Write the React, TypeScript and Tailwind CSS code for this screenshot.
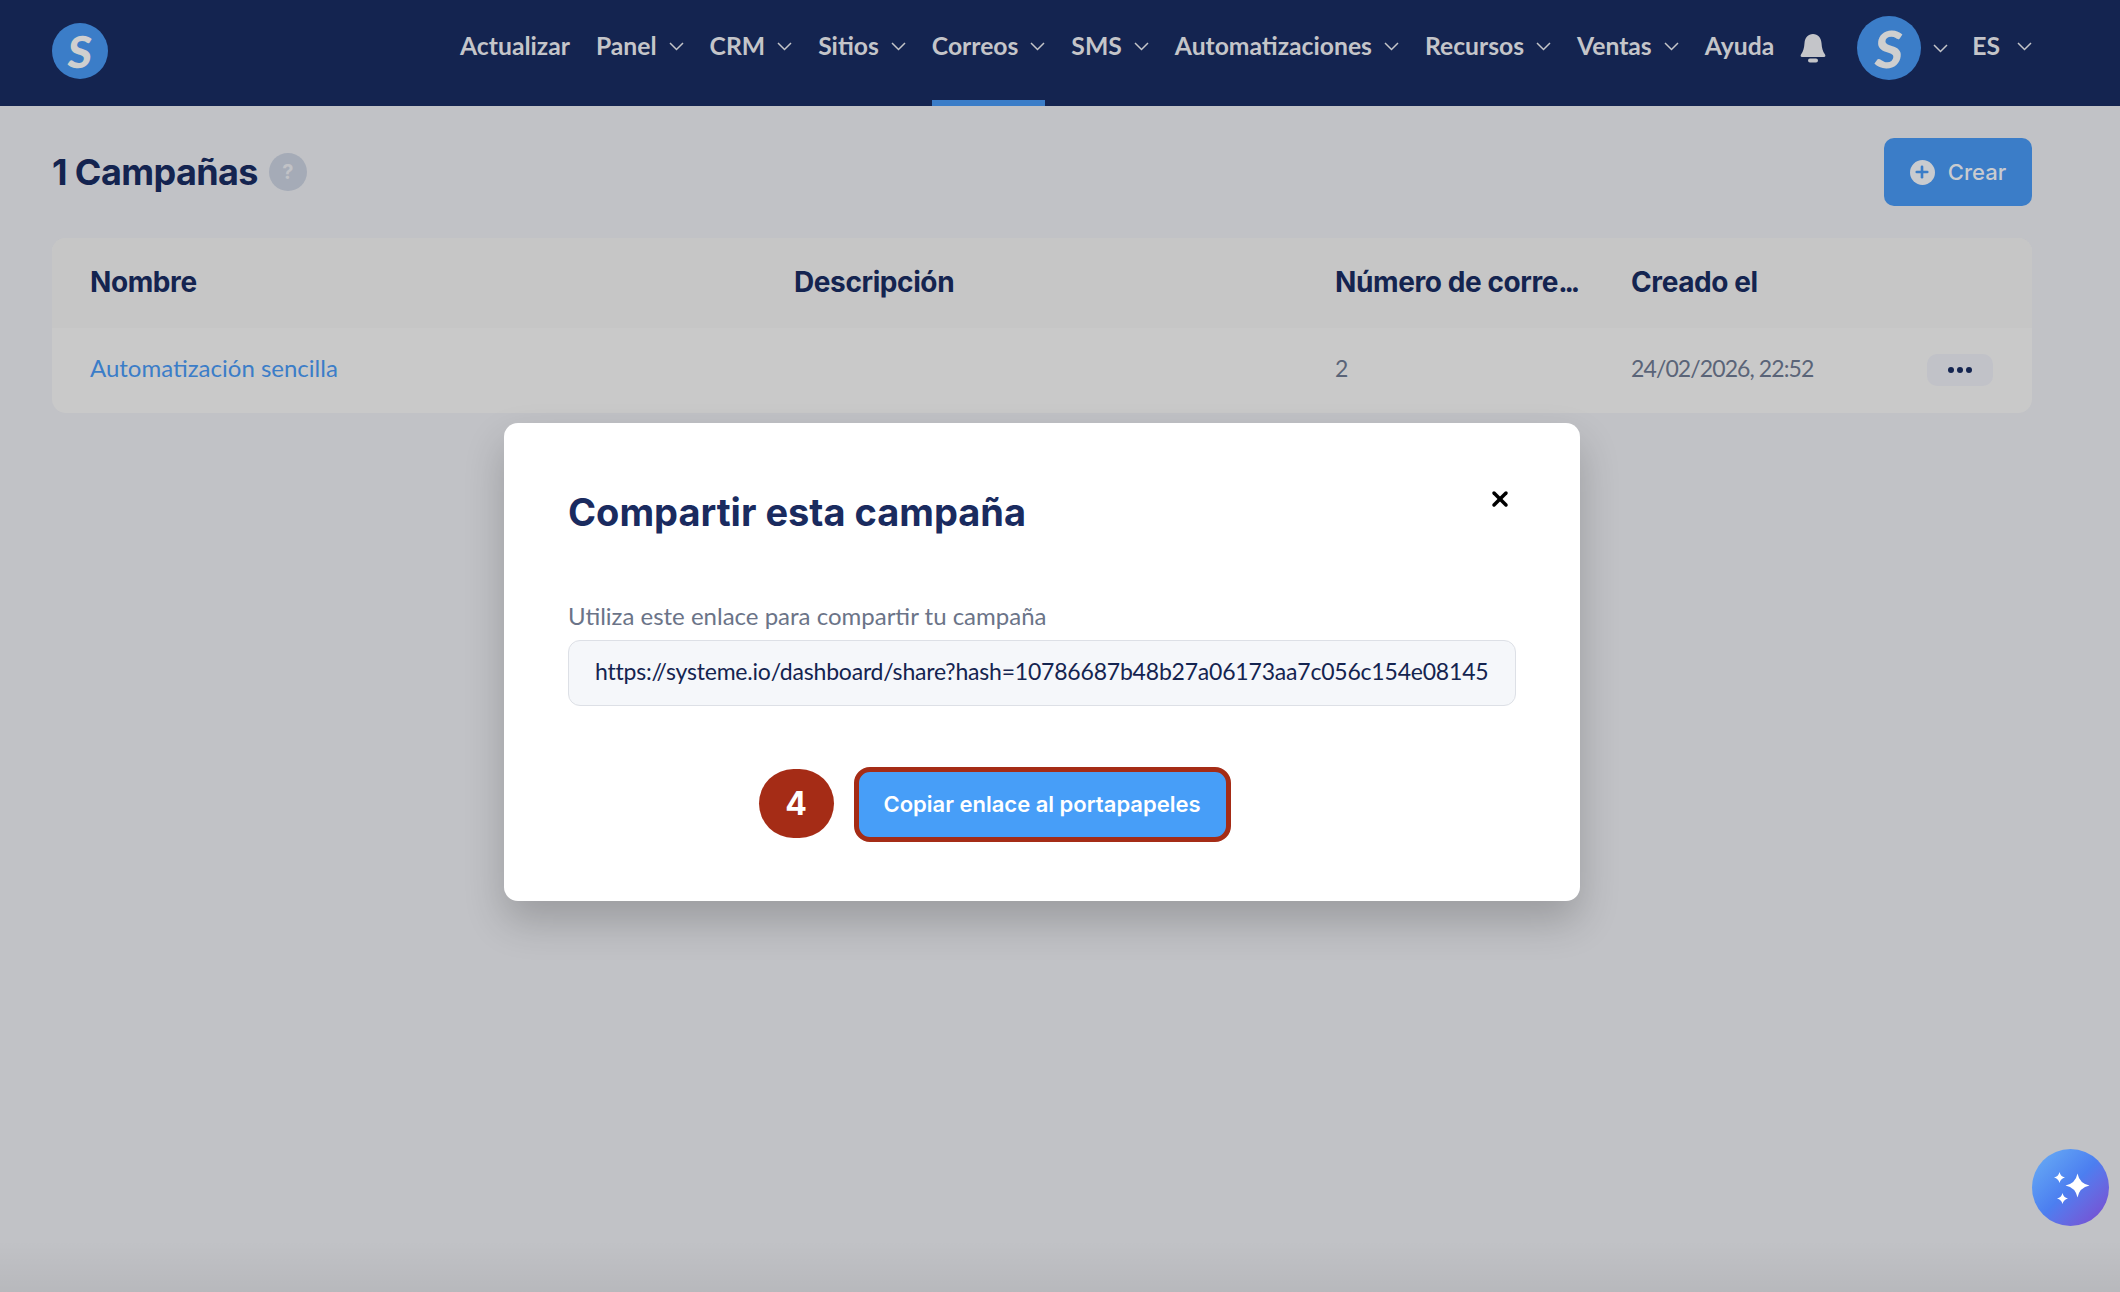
import React from "react";
import { X, Plus } from "lucide-react";

const navItems = [
  { label: "Actualizar", chevron: false },
  { label: "Panel", chevron: true },
  { label: "CRM", chevron: true },
  { label: "Sitios", chevron: true },
  { label: "Correos", chevron: true, active: true },
  { label: "SMS", chevron: true },
  { label: "Automatizaciones", chevron: true },
  { label: "Recursos", chevron: true },
  { label: "Ventas", chevron: true },
  { label: "Ayuda", chevron: false },
];

function Chevron() {
  return (
    <svg width="15" height="9" viewBox="0 0 15 9" fill="none" className="stroke-[#c4c5c9]">
      <path d="M1 1l6.500 6.500L14 1" strokeWidth="1.500" />
    </svg>
  );
}

function NavItem({ label, chevron, active }: { label: string; chevron: boolean; active?: boolean }) {
  return (
    <div
      className={`flex h-[106px] items-center gap-[12px] border-b-[6px] pb-[8px] ${
        active ? "border-[#3b7dc8]" : "border-transparent"
      }`}
    >
      <span className="text-[24.7px] font-bold leading-none text-[#c4c5c9]">{label}</span>
      {chevron && <Chevron />}
    </div>
  );
}

export default function App() {
  return (
    <div className="relative h-[1292px] w-full overflow-hidden bg-[#c1c2c6] font-['Lato',sans-serif]">
      {/* Header */}
      <header className="flex h-[106px] items-start justify-between bg-[#142450] pl-[52px] pr-[88px]">
        <div className="mt-[23px] flex h-[56px] w-[56px] items-center justify-center rounded-full bg-[#3b7dc8]">
          <span className="-skew-x-6 text-[44px] font-black leading-none text-[#cfcfcf]">S</span>
        </div>
        <nav className="flex items-start gap-[26px]">
          {navItems.map((item) => (
            <NavItem key={item.label} {...item} />
          ))}
          <div className="mr-[5px] flex h-[96px] items-center">
            <svg width="26" height="29" viewBox="0 0 26 29" className="fill-[#c4c5c9]">
              <path d="M13 0c5 0 8 3.500 8.500 9 .4 5 1 8 3.500 11.500.8 1.200.3 2.500-1 2.500H2c-1.300 0-1.800-1.300-1-2.500C3.500 17 4.100 14 4.500 9 5 3.500 8 0 13 0z" />
              <rect x="8" y="24.500" width="10" height="4" rx="2" />
            </svg>
          </div>
          <div className="-mr-[2px] flex h-[96px] items-center gap-[12px]">
            <div className="flex h-[64px] w-[64px] items-center justify-center rounded-full bg-[#3b7dc8]">
              <span className="-skew-x-6 text-[51px] font-black leading-none text-[#cfcfcf]">S</span>
            </div>
            <Chevron />
          </div>
          <div className="flex h-[106px] items-center gap-[17px] pb-[14px]">
            <span className="text-[24.7px] font-bold leading-none text-[#c4c5c9]">ES</span>
            <Chevron />
          </div>
        </nav>
      </header>

      {/* Page */}
      <main className="pl-[52px] pr-[88px] pt-[32px]">
        <div className="flex h-[68px] items-center justify-between font-['Inter',sans-serif]">
          <div className="flex items-center gap-[11px]">
            <h1 className="text-[36px] font-bold tracking-[-0.6px] text-[#142450]">1 Campañas</h1>
            <div className="flex h-[38px] w-[38px] items-center justify-center rounded-full bg-[#a5abb7] text-[20px] font-bold text-[#c1c2c6]">
              ?
            </div>
          </div>
          <button className="flex h-[68px] w-[148px] items-center justify-center gap-[13px] rounded-[10px] bg-[#3b7dc8] text-[22px] font-medium text-[#c9cbcf]">
            <span className="flex h-[25px] w-[25px] items-center justify-center rounded-full bg-[#c9cbcf]">
              <Plus size={18} strokeWidth={3.5} className="text-[#3b7dc8]" />
            </span>
            Crear
          </button>
        </div>

        <div className="mt-[32px] overflow-hidden rounded-[14px] bg-[#c9c9c9]">
          <div className="flex h-[90px] items-center bg-[#c6c6c6] pb-[2px] font-['Inter',sans-serif] text-[28px] font-bold tracking-[-0.4px] text-[#142450]">
            <div className="w-[742px] pl-[38px]">Nombre</div>
            <div className="w-[541px]">Descripción</div>
            <div className="w-[296px]">
              Número de corre<span className="tracking-[-3px]">...</span>
            </div>
            <div>Creado el</div>
          </div>
          <div className="flex h-[85px] items-center text-[24px]">
            <div className="w-[742px] pb-[5px] pl-[38px] text-[#3b7dc8]">Automatización sencilla</div>
            <div className="w-[541px]" />
            <div className="w-[296px] pb-[5px] text-[23px] text-[#5a6478]">2</div>
            <div className="w-[296px] pb-[5px] text-[23px] tracking-[-0.9px] text-[#5a6478]">24/02/2026, 22:52</div>
            <button className="mb-[2px] flex h-[32px] w-[66px] items-center justify-center gap-[3px] rounded-[10px] bg-[#c1c2c8]">
              <span className="h-[6px] w-[6px] rounded-full bg-[#142450]" />
              <span className="h-[6px] w-[6px] rounded-full bg-[#142450]" />
              <span className="h-[6px] w-[6px] rounded-full bg-[#142450]" />
            </button>
          </div>
        </div>
      </main>

      {/* Modal */}
      <div className="absolute left-[504px] top-[423px] h-[478px] w-[1076px] rounded-[14px] bg-white px-[64px] shadow-[0_20px_40px_rgba(0,0,0,0.2)]">
        <div className="flex h-[124px] items-start justify-between">
          <h2 className="mt-[70px] font-['Inter',sans-serif] text-[38px] font-bold leading-none text-[#1a2b5f]">
            Compartir esta campaña
          </h2>
          <X size={24} strokeWidth={3.5} className="mr-[4px] mt-[64px] text-black" />
        </div>
        <div className="mt-[52px] text-[24px] leading-[34px] text-[#6b7488]">
          Utiliza este enlace para compartir tu campaña
        </div>
        <div className="mt-[7px] flex h-[66px] items-center whitespace-nowrap rounded-[12px] border border-[#dde0e6] bg-[#f5f7fa] px-[26px] pb-[4px] text-[23px] tracking-[-0.2px] text-[#142450]">
          https://systeme.io/dashboard/share?hash=10786687b48b27a06173aa7c056c154e08145
        </div>
        <div className="mt-[61px] flex justify-center font-['Inter',sans-serif]">
          <div className="relative">
            <div className="absolute right-full top-[2px] mr-[20px] flex h-[69px] w-[75px] items-center justify-center rounded-full bg-[#a52c16] text-[32px] font-bold text-white">
              4
            </div>
            <button className="flex h-[75px] w-[377px] items-center justify-center rounded-[16px] border-[5px] border-[#a52c16] bg-[#479ef8] text-[22px] font-semibold text-white">
              Copiar enlace al portapapeles
            </button>
          </div>
        </div>
      </div>

      {/* AI assistant button */}
      <button className="absolute left-[2032px] top-[1149px] flex h-[77px] w-[77px] items-center justify-center rounded-full bg-gradient-to-br from-[#6cb0f5] via-[#4c7ef0] to-[#7a45cc]">
        <svg width="38" height="36" viewBox="0 0 38 36" className="fill-white">
          <path d="M25.500 3.500Q27.500 13.500 37.500 15.500Q27.500 17.500 25.500 27.500Q23.500 17.500 13.500 15.500Q23.500 13.500 25.500 3.500z" />
          <path d="M7.500 2Q8.500 6.500 13 7.500Q8.500 8.500 7.500 13Q6.500 8.500 2 7.500Q6.500 6.500 7.500 2z" />
          <path d="M10.500 23Q11.500 27.500 16 28.500Q11.500 29.500 10.500 34Q9.500 29.500 5 28.500Q9.500 27.500 10.500 23z" />
        </svg>
      </button>

      {/* faint window edge shading */}
      <div className="pointer-events-none absolute bottom-0 left-0 h-[52px] w-full bg-gradient-to-b from-transparent to-black/5" />
    </div>
  );
}
